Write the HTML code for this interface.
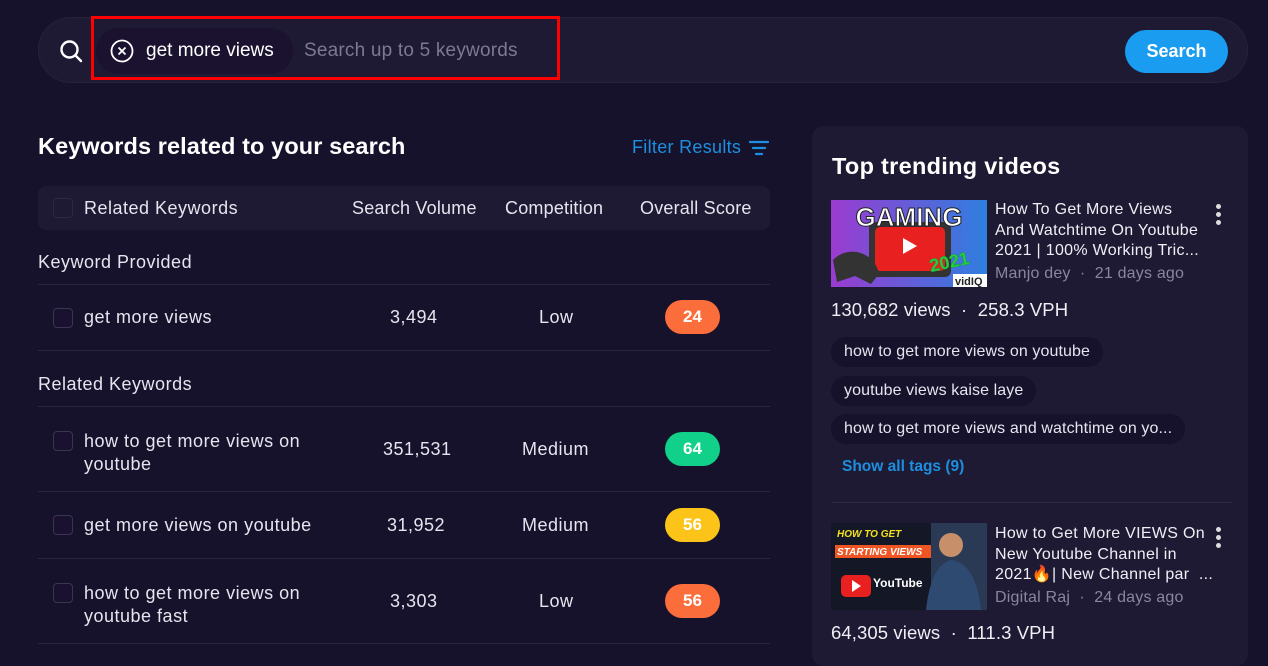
<!DOCTYPE html>
<html><head><meta charset="utf-8"><style>
*{margin:0;padding:0;box-sizing:border-box}
body{width:1268px;height:652px;overflow:hidden;background:#16122b;font-family:"Liberation Sans",sans-serif;color:#e8e6f0;position:relative}
.a{position:absolute;white-space:nowrap}
.bar{left:38px;top:17px;width:1210px;height:66px;border-radius:33px;background:#1e1a33;border:1px solid #26223c}
.chip{left:96px;top:28px;width:197px;height:46px;border-radius:23px;background:#1b1230}
.red{left:91px;top:16px;width:469px;height:64px;border:3px solid #f00}
.btn{left:1125px;top:30px;width:103px;height:43px;border-radius:22px;background:#1a9cf0;color:#fff;font-weight:bold;font-size:18px;text-align:center;line-height:43px}
.th{left:38px;top:186px;width:732px;height:44px;background:#1e1a33;border-radius:8px}
.cb{width:20px;height:20px;border:1px solid #3a3550;border-radius:4px;background:#1a1030}
.ln{left:38px;width:732px;height:1px;background:#2a2640}
.t17{font-size:18px;letter-spacing:.5px;color:#e6e4ee}
.badge{width:55px;height:34px;border-radius:17px;color:#fff;font-weight:bold;font-size:17px;text-align:center;line-height:34px;left:665px}
.panel{left:812px;top:126px;width:436px;height:540px;border-radius:12px;background:#1e1a33}
.tag{left:831px;height:30px;border-radius:15px;background:#16122b;font-size:16px;letter-spacing:.1px;line-height:30px;padding:0 13px;color:#e6e4ee}
.vt{font-size:16px;letter-spacing:.3px;color:#f0eef5;line-height:20.5px;left:995px}
.gray{color:#8a86a0;font-size:16px;letter-spacing:.2px}
.dots{left:1216px;width:5px}
.dots i{display:block;width:5px;height:5px;border-radius:50%;background:#ddd;margin-bottom:3px}
</style></head><body>
<div class="a bar"></div>
<svg class="a" style="left:58px;top:38px" width="26" height="26" viewBox="0 0 26 26"><circle cx="11.5" cy="11.5" r="8" fill="none" stroke="#fff" stroke-width="2.4"/><path d="M17.5 17.5L23 23" stroke="#fff" stroke-width="2.4" stroke-linecap="round"/></svg>
<div class="a chip"></div>
<svg class="a" style="left:110px;top:39px" width="24" height="24" viewBox="0 0 24 24"><circle cx="12" cy="12" r="10.5" fill="none" stroke="#fff" stroke-width="1.8"/><path d="M8.5 8.5l7 7M15.5 8.5l-7 7" stroke="#fff" stroke-width="1.8"/></svg>
<div class="a" style="left:146px;top:40px;font-size:19px;color:#fff">get more views</div>
<div class="a" style="left:304px;top:40px;font-size:19px;letter-spacing:.2px;color:#7d7894">Search up to 5 keywords</div>
<div class="a red"></div>
<div class="a btn">Search</div>

<div class="a" style="left:38px;top:133px;font-size:23.5px;letter-spacing:.1px;font-weight:bold;color:#fff">Keywords related to your search</div>
<div class="a" style="left:632px;top:137px;font-size:18px;letter-spacing:.3px;color:#1d8fe0">Filter Results</div>
<svg class="a" style="left:749px;top:140px" width="20" height="16" viewBox="0 0 20 16"><path d="M1 2h18M4 8h12M7 14h6" stroke="#1d8fe0" stroke-width="2.2" stroke-linecap="round"/></svg>

<div class="a th"></div>
<div class="a cb" style="left:53px;top:198px;background:#1e1a33;border-color:#2c283f"></div>
<div class="a t17" style="left:84px;top:198px">Related Keywords</div>
<div class="a t17" style="left:352px;top:198px;letter-spacing:.2px">Search Volume</div>
<div class="a t17" style="left:505px;top:198px;letter-spacing:.2px">Competition</div>
<div class="a t17" style="left:640px;top:198px;letter-spacing:.2px">Overall Score</div>

<div class="a t17" style="left:38px;top:252px">Keyword Provided</div>
<div class="a ln" style="top:284px"></div>
<div class="a cb" style="left:53px;top:308px"></div>
<div class="a t17" style="left:84px;top:307px">get more views</div>
<div class="a t17" style="left:390px;top:307px">3,494</div>
<div class="a t17" style="left:539px;top:307px">Low</div>
<div class="a badge" style="top:300px;background:#fb6d3a">24</div>
<div class="a ln" style="top:350px"></div>

<div class="a t17" style="left:38px;top:374px">Related Keywords</div>
<div class="a ln" style="top:406px"></div>
<div class="a cb" style="left:53px;top:431px"></div>
<div class="a t17" style="left:84px;top:430px;line-height:23px">how to get more views on<br>youtube</div>
<div class="a t17" style="left:383px;top:439px">351,531</div>
<div class="a t17" style="left:522px;top:439px">Medium</div>
<div class="a badge" style="top:432px;background:#10d08a">64</div>
<div class="a ln" style="top:491px"></div>
<div class="a cb" style="left:53px;top:515px"></div>
<div class="a t17" style="left:84px;top:515px">get more views on youtube</div>
<div class="a t17" style="left:387px;top:515px">31,952</div>
<div class="a t17" style="left:522px;top:515px">Medium</div>
<div class="a badge" style="top:508px;background:#fcc419">56</div>
<div class="a ln" style="top:558px"></div>
<div class="a cb" style="left:53px;top:583px"></div>
<div class="a t17" style="left:84px;top:582px;line-height:23px">how to get more views on<br>youtube fast</div>
<div class="a t17" style="left:390px;top:591px">3,303</div>
<div class="a t17" style="left:539px;top:591px">Low</div>
<div class="a badge" style="top:584px;background:#fb6d3a">56</div>
<div class="a ln" style="top:643px"></div>

<div class="a panel"></div>
<div class="a" style="left:832px;top:153px;font-size:23.5px;letter-spacing:.3px;font-weight:bold;color:#fff">Top trending videos</div>
<svg class="a" style="left:831px;top:200px" width="156" height="87" viewBox="0 0 156 87"><defs><linearGradient id="g" x1="0" x2="1"><stop offset="0" stop-color="#9b3bd0"/><stop offset="1" stop-color="#2e7fe0"/></linearGradient></defs><rect width="156" height="87" fill="url(#g)"/><rect x="38" y="22" width="82" height="55" rx="6" fill="#333"/><rect x="44" y="27" width="70" height="44" rx="5" fill="#e8201f"/><path d="M72 38l14 8-14 8z" fill="#fff"/><text x="78" y="26" text-anchor="middle" font-family="Liberation Sans" font-weight="bold" font-size="26" fill="#fff" stroke="#222" stroke-width="1">GAMING</text><text x="100" y="72" font-family="Liberation Sans" font-weight="bold" font-size="18" fill="#2ecc40" transform="rotate(-12 100 72)" stroke="#0a3" stroke-width=".5">2021</text><path d="M2 60q10-10 24-8 18 4 22 22l-8 10-16-8-18 6z" fill="#333"/><rect x="122" y="74" width="34" height="13" fill="#fff"/><text x="124" y="85" font-size="11" font-weight="bold" font-family="Liberation Sans" fill="#222">vidIQ</text></svg>
<div class="a vt" style="top:200px">How To Get More Views<br>And Watchtime On Youtube<br>2021 | 100% Working Tric...</div>
<div class="a gray" style="left:995px;top:265px">Manjo dey &nbsp;·&nbsp; 21 days ago</div>
<div class="a dots" style="top:204px"><i></i><i></i><i></i></div>
<div class="a" style="left:831px;top:299px;font-size:18.5px;letter-spacing:.1px;color:#f0eef5">130,682 views &nbsp;·&nbsp; 258.3 VPH</div>
<div class="a tag" style="top:337px">how to get more views on youtube</div>
<div class="a tag" style="top:376px">youtube views kaise laye</div>
<div class="a tag" style="top:414px">how to get more views and watchtime on yo...</div>
<div class="a" style="left:842px;top:458px;font-size:15.5px;font-weight:bold;color:#1d8fe0">Show all tags (9)</div>
<div class="a" style="left:832px;top:502px;width:400px;height:1px;background:#2e2a44"></div>
<svg class="a" style="left:831px;top:523px" width="156" height="87" viewBox="0 0 156 87"><rect width="156" height="87" fill="#141826"/><rect x="100" y="0" width="56" height="87" fill="#2a3a55"/><circle cx="120" cy="22" r="12" fill="#c8906a"/><path d="M95 87q5-45 25-50 25 3 30 50z" fill="#2f4a70"/><text x="6" y="14" font-size="10" font-weight="bold" font-style="italic" font-family="Liberation Sans" fill="#f5e020">HOW TO GET</text><rect x="4" y="22" width="96" height="13" fill="#e52"/><text x="6" y="32" font-size="10" font-weight="bold" font-style="italic" font-family="Liberation Sans" fill="#fff">STARTING VIEWS</text><rect x="10" y="52" width="30" height="22" rx="5" fill="#e8201f"/><path d="M21 57l9 6-9 6z" fill="#fff"/><text x="42" y="64" font-size="12" font-weight="bold" font-family="Liberation Sans" fill="#fff">YouTube</text></svg>
<div class="a vt" style="top:524px">How to Get More VIEWS On<br>New Youtube Channel in<br>2021🔥| New Channel par &nbsp;...</div>
<div class="a gray" style="left:995px;top:589px">Digital Raj &nbsp;·&nbsp; 24 days ago</div>
<div class="a dots" style="top:527px"><i></i><i></i><i></i></div>
<div class="a" style="left:831px;top:622px;font-size:18.5px;letter-spacing:.1px;color:#f0eef5">64,305 views &nbsp;·&nbsp; 111.3 VPH</div>
</body></html>
